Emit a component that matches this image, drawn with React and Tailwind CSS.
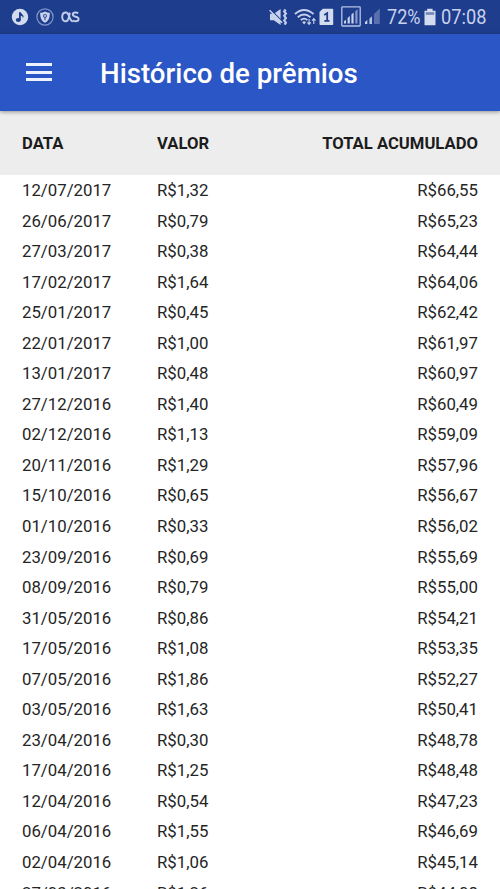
import React from "react";

const rows = [
  ["12/07/2017", "R$1,32", "R$66,55"],
  ["26/06/2017", "R$0,79", "R$65,23"],
  ["27/03/2017", "R$0,38", "R$64,44"],
  ["17/02/2017", "R$1,64", "R$64,06"],
  ["25/01/2017", "R$0,45", "R$62,42"],
  ["22/01/2017", "R$1,00", "R$61,97"],
  ["13/01/2017", "R$0,48", "R$60,97"],
  ["27/12/2016", "R$1,40", "R$60,49"],
  ["02/12/2016", "R$1,13", "R$59,09"],
  ["20/11/2016", "R$1,29", "R$57,96"],
  ["15/10/2016", "R$0,65", "R$56,67"],
  ["01/10/2016", "R$0,33", "R$56,02"],
  ["23/09/2016", "R$0,69", "R$55,69"],
  ["08/09/2016", "R$0,79", "R$55,00"],
  ["31/05/2016", "R$0,86", "R$54,21"],
  ["17/05/2016", "R$1,08", "R$53,35"],
  ["07/05/2016", "R$1,86", "R$52,27"],
  ["03/05/2016", "R$1,63", "R$50,41"],
  ["23/04/2016", "R$0,30", "R$48,78"],
  ["17/04/2016", "R$1,25", "R$48,48"],
  ["12/04/2016", "R$0,54", "R$47,23"],
  ["06/04/2016", "R$1,55", "R$46,69"],
  ["02/04/2016", "R$1,06", "R$45,14"],
  ["27/03/2016", "R$1,26", "R$44,08"],
];

function MusicIcon() {
  return (
    <svg width="18" height="18" viewBox="0 0 18 18">
      <circle cx="9" cy="9" r="8.2" fill="#d3dbef" />
      <ellipse cx="7.3" cy="12" rx="2.5" ry="2.1" fill="#1e3d8c" />
      <path d="M8 12V4.2h1.8c.2 1.7 2.7 2 2.7 4.6l-.5 1.5c-.2-1.7-1-2.2-2.2-2.5V12z" fill="#1e3d8c" />
    </svg>
  );
}

function ShieldIcon() {
  return (
    <svg width="18" height="18" viewBox="0 0 18 18">
      <circle cx="9" cy="9" r="8.1" fill="none" stroke="#8397ca" strokeWidth="1.2" />
      <path d="M9 3.5c1.4.9 3 1.2 4.8 1.2 0 4.7-.9 7.9-4.8 10-3.9-2.1-4.8-5.3-4.8-10 1.8 0 3.4-.3 4.8-1.2z" fill="#cbd5ed" />
      <circle cx="9" cy="7.9" r="1.7" fill="#a6b5db" stroke="#3b5699" strokeWidth=".9" />
      <path d="M9 9.5v2.8" stroke="#3b5699" strokeWidth="1.2" />
    </svg>
  );
}

function ScrobbleIcon() {
  return (
    <svg width="19" height="12" viewBox="0 0 19 12" fill="none" stroke="#c2cdea" strokeWidth="1.9">
      <path d="M8.9 1.6C8 4.2 8.1 10.3 4.9 10.3 2.6 10.3 1.2 8.5 1.2 5.9S2.7 1.5 5 1.5c3.7 0 3 8.8 6.8 8.8" />
      <path d="M17.2 2.2c-.8-.5-1.8-.7-2.8-.7-1.6 0-2.6.7-2.6 2 0 3 5.8 1.5 5.8 4.5 0 1.5-1.2 2.3-3 2.3-1.1 0-1.9-.2-2.8-.7" />
    </svg>
  );
}

function MutedIcon() {
  return (
    <svg width="19" height="18" viewBox="0 0 19 18" fill="none">
      <path d="M1 5.8h3.8L11.6 1v16l-6.8-4.8H1z" fill="#c8d2ec" />
      <path d="M1.4 1.2l12 12.4" stroke="#1e3d8c" strokeWidth="1.2" />
      <path d="M.6 2.2l12.6 12.6" stroke="#c8d2ec" strokeWidth="1.5" />
      <path d="M16.6 1.5l-1.4 2 1.7 2-1.7 2.3 1.7 2.3-1.7 2.3 1.7 2.3-1.4 2" stroke="#c0ccea" strokeWidth="2.2" />
    </svg>
  );
}

function WifiIcon() {
  return (
    <svg width="23" height="18" viewBox="0 0 23 18" fill="none" stroke="#c8d2ec" strokeWidth="1.8">
      <path d="M1 6Q10 -2 19.5 6M3.8 9.2Q10 3.8 16.5 9.2M6.8 12.2Q10 9 13.4 12.2" />
      <path d="M8.2 14.1q2-1.5 3.8 0l-1.9 2.4z" fill="#c8d2ec" stroke="none" />
      <path d="M15.1 11v5m-1.7-1.7 1.7 2 1.7-2M19.8 16v-5m-1.7 1.7 1.7-2 1.7 2" strokeWidth="1.1" />
    </svg>
  );
}

function SimIcon() {
  return (
    <svg width="15" height="18" viewBox="0 0 15 18">
      <path d="M3.8.7h9.6q.8 0 .8.8v14.7q0 .8-.8.8H1.3q-.8 0-.8-.8V4z" fill="#d3dbef" />
      <path d="M8.2 13.4V5.1L5.2 7M5.4 12.9h5" fill="none" stroke="#1e3d8c" strokeWidth="1.8" />
    </svg>
  );
}

function BoxedSignalIcon() {
  return (
    <svg width="20" height="21" viewBox="0 0 20 21">
      <rect x=".8" y=".8" width="18.4" height="19.2" rx=".8" fill="none" stroke="#b6c4e8" strokeWidth="1.3" />
      <path d="M3 17.5v-2.2l2-1.5v3.7zM6.6 17.5V12l2.2-2v7.5zM10.4 17.5v-9l2.2-2v11z" fill="#c9d3ed" />
      <path d="M14.3 17.5V5.3l2.2-2v14.2z" fill="#8699cc" />
    </svg>
  );
}

function SignalIcon() {
  return (
    <svg width="17" height="17" viewBox="0 0 17 17">
      <path d="M1 16v-2l2.3-2v4z" fill="#c9d3ed" />
      <path d="M5.4 16v-5.3L8 8.3V16z" fill="#b3c1e4" />
      <path d="M10 16V6l5.8-5.5V16z" fill="#5870b0" />
    </svg>
  );
}

function BatteryIcon() {
  return (
    <svg width="12" height="18" viewBox="0 0 12 18">
      <path d="M3.2.8h5.4v1.9h2.9v14.5H.5V2.7h2.7z" fill="#d3dbef" />
      <path d="M1.8 4.2h8.4v2.6H1.8z" fill="#7185b7" />
    </svg>
  );
}

function StatusBar() {
  return (
    <header className="flex h-[34px] shrink-0 items-center bg-[#1e3d8c] pb-px text-[#c8d2ec]">
      <div className="ml-[11px] flex items-center gap-[7px]">
        <MusicIcon />
        <ShieldIcon />
        <ScrobbleIcon />
      </div>
      <div className="ml-auto flex items-center">
        <MutedIcon />
        <div className="ml-[6px]"><WifiIcon /></div>
        <div className="ml-[2px]"><SimIcon /></div>
        <div className="ml-[7px]"><BoxedSignalIcon /></div>
        <div className="ml-[3px]"><SignalIcon /></div>
      </div>
      <div className="ml-[6px] w-[37px]">
        <span className="block origin-left scale-x-[0.88] text-[20.5px] leading-[34px] whitespace-nowrap">72%</span>
      </div>
      <div><BatteryIcon /></div>
      <div className="ml-[5px] w-[59px]">
        <span className="block origin-left scale-x-[0.89] text-[20.5px] leading-[34px] whitespace-nowrap">07:08</span>
      </div>
    </header>
  );
}

export default function App() {
  return (
    <div className="flex h-[889px] w-[500px] flex-col overflow-hidden bg-white font-['Roboto',sans-serif] text-[#252525]">
      <StatusBar />
      <div className="z-10 flex h-[77px] shrink-0 items-center bg-[#2a56c6] text-white shadow-[0_1px_4px_rgba(0,0,0,0.4)]">
        <button aria-label="Menu" className="mb-px ml-[26px] flex w-[26px] flex-col gap-[4.5px]">
          <span className="h-[3px] bg-[#edf2ff]" />
          <span className="h-[3px] bg-[#edf2ff]" />
          <span className="h-[3px] bg-[#edf2ff]" />
        </button>
        <h1 className="ml-[48px] pt-[3px] text-[27.7px] leading-8 font-medium whitespace-nowrap">Histórico de prêmios</h1>
      </div>
      <div className="grid h-[64px] shrink-0 grid-cols-[135px_100px_1fr] items-center bg-[#ededed] px-[22px] pt-[2px] text-[16.65px] font-bold text-[#1c1c1c]">
        <span>DATA</span>
        <span>VALOR</span>
        <span className="text-right">TOTAL ACUMULADO</span>
      </div>
      <main className="pt-[0.3px]">
        {rows.map(([date, value, total]) => (
          <div key={date} className="grid h-[30.55px] grid-cols-[135px_100px_1fr] items-center px-[22px] text-[16.8px]">
            <span>{date}</span>
            <span>{value}</span>
            <span className="text-right">{total}</span>
          </div>
        ))}
      </main>
    </div>
  );
}
